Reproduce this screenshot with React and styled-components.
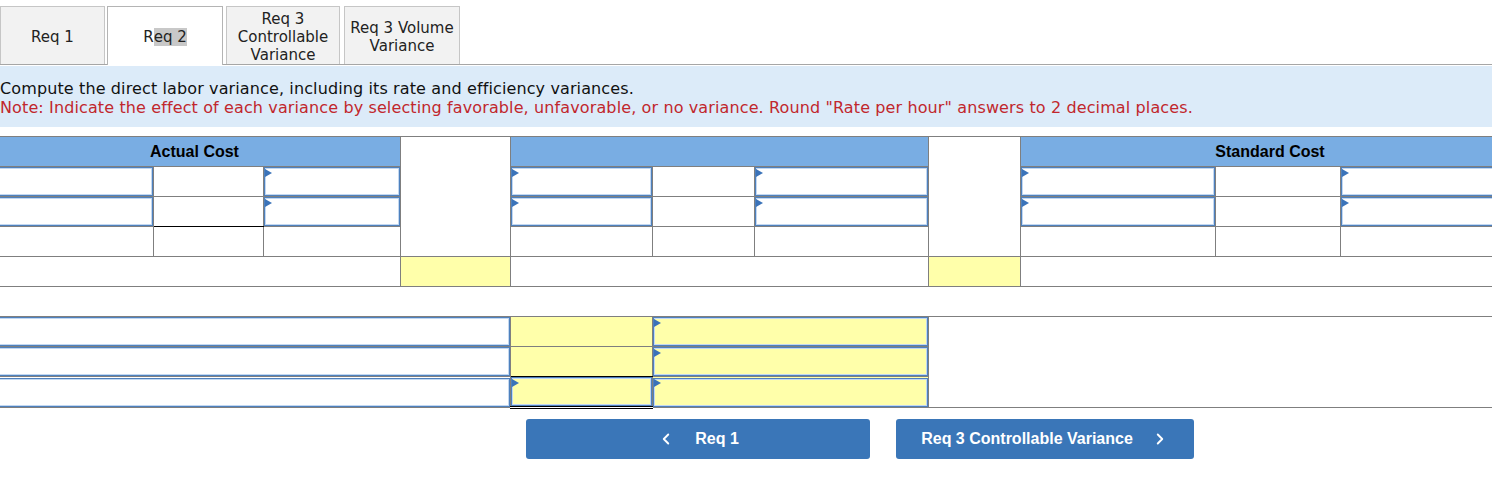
import styled, { createGlobalStyle, css } from "styled-components";
import { ChevronLeft, ChevronRight } from "lucide-react";

const GlobalStyle = createGlobalStyle`
  body {
    margin: 0;
    background: #fff;
    font-family: "DejaVu Sans", Verdana, sans-serif;
  }
`;

const Page = styled.div`
  width: 1492px;
  overflow: hidden;
`;

const TabBar = styled.div`
  display: flex;
  align-items: flex-end;
  height: 64px;
  border-bottom: 1px solid #a6a6a6;
`;

const Tab = styled.div`
  display: flex;
  align-items: center;
  justify-content: center;
  box-sizing: border-box;
  width: ${(p) => p.$w}px;
  height: 58px;
  padding-top: 2px;
  margin-right: ${(p) => p.$gap || 3}px;
  border: 1px solid #c6c6c6;
  border-bottom: none;
  background: #f2f2f2;
  font-size: 15px;
  line-height: 18px;
  color: #222;
  text-align: center;

  ${(p) =>
    p.$active &&
    css`
      background: #fff;
      border-color: #b4b4b4;
      height: 59px;
      padding-top: 1px;
      margin-bottom: -1px;
    `}
`;

const Selected = styled.span`
  background: #c8c8c8;
`;

const Instructions = styled.div`
  margin-top: 1px;
  height: 61px;
  box-sizing: border-box;
  padding: 13px 0 0 0;
  background: #dcebf9;
  font-size: 16px;
  letter-spacing: 0.12px;
  line-height: 19px;
  color: #111;
`;

const Line = styled.div`
  white-space: nowrap;
`;

const Note = styled(Line)`
  color: #c1272d;
`;

const TableWrap = styled.div`
  margin-top: 9px;
  overflow: hidden;
`;

const Grid = styled.table`
  margin-left: -12px;
  width: 1531px;
  table-layout: fixed;
  border-collapse: collapse;
  font-family: "Liberation Sans", Arial, sans-serif;
`;

const Row = styled.tr`
  height: 30px;
`;

const Head = styled.th`
  padding: 0;
  border: 1px solid #7f7f7f;
  background: #79ade3;
  font-size: 16px;
  font-weight: bold;
  color: #000;
  text-align: center;
`;

const Cell = styled.td`
  position: relative;
  padding: 0;
  border: 1px solid #7f7f7f;
  background: ${(p) => (p.$yellow ? "#ffffaa" : "#fff")};
  ${(p) => p.$bottom && `border-bottom: ${p.$bottom};`}
  ${(p) =>
    p.$open &&
    css`
      border-left: none;
      border-right: none;
    `}
`;

const Blank = styled.td`
  padding: 0;
  border: none;
`;

const Input = styled.input`
  display: block;
  box-sizing: border-box;
  width: 100%;
  height: 29px;
  margin: 0;
  border: 1px solid #4f81bd;
  box-shadow: inset 0 0 0 1px #c3d8f1;
  background: ${(p) => (p.$yellow ? "#ffffaa" : "#fff")};
  outline: none;
`;

const Arrow = styled.span`
  position: absolute;
  top: 2px;
  left: 1px;
  width: 0;
  height: 0;
  border-top: 4px solid transparent;
  border-bottom: 4px solid transparent;
  border-left: 7px solid #3b73b9;
`;

const ButtonRow = styled.div`
  display: flex;
  gap: 26px;
  margin-top: 10px;
  padding-left: 526px;
`;

const NavButton = styled.button`
  display: flex;
  align-items: center;
  justify-content: center;
  gap: ${(p) => p.$gap}px;
  width: ${(p) => p.$w}px;
  height: 40px;
  border: none;
  border-radius: 3px;
  background: #3a76b8;
  color: #fff;
  font-family: "Liberation Sans", Arial, sans-serif;
  font-size: 16px;
  font-weight: bold;
  cursor: pointer;
`;

function InputCell({ arrow, yellow, bottom, colSpan }) {
  return (
    <Cell $yellow={yellow} $bottom={bottom} colSpan={colSpan}>
      {arrow && <Arrow />}
      <Input $yellow={yellow} />
    </Cell>
  );
}

const widths = [165, 110, 137, 110, 142, 102, 174, 92, 195, 125, 179];

function EntryRow({ blackUnderB }) {
  return (
    <Row>
      <InputCell />
      <Cell $bottom={blackUnderB ? "1px solid #000" : undefined} />
      <InputCell arrow />
      <InputCell arrow />
      <Cell />
      <InputCell arrow />
      <InputCell arrow />
      <Cell />
      <InputCell arrow />
    </Row>
  );
}

function App() {
  return (
    <Page>
      <GlobalStyle />
      <TabBar>
        <Tab $w={105} $gap={2}>Req 1</Tab>
        <Tab $w={116} $gap={3} $active>
          R<Selected>eq 2</Selected>
        </Tab>
        <Tab $w={114} $gap={4}>
          Req 3
          <br />
          Controllable
          <br />
          Variance
        </Tab>
        <Tab $w={116}>
          Req 3 Volume
          <br />
          Variance
        </Tab>
      </TabBar>

      <Instructions>
        <Line>
          Compute the direct labor variance, including its rate and efficiency
          variances.
        </Line>
        <Note>
          Note: Indicate the effect of each variance by selecting favorable,
          unfavorable, or no variance. Round "Rate per hour" answers to 2
          decimal places.
        </Note>
      </Instructions>

      <TableWrap>
        <Grid>
          <colgroup>
            {widths.map((w, i) => (
              <col key={i} style={{ width: w }} />
            ))}
          </colgroup>
          <tbody>
            <Row>
              <Head colSpan={3}>Actual Cost</Head>
              <Cell rowSpan={4} />
              <Head colSpan={3} />
              <Cell rowSpan={4} />
              <Head colSpan={3}>Standard Cost</Head>
            </Row>
            <EntryRow />
            <EntryRow blackUnderB />
            <Row>
              <Cell />
              <Cell />
              <Cell />
              <Cell />
              <Cell />
              <Cell />
              <Cell />
              <Cell />
              <Cell />
            </Row>
            <Row>
              <Cell colSpan={3} />
              <Cell $yellow />
              <Cell colSpan={3} />
              <Cell $yellow />
              <Cell colSpan={3} />
            </Row>
            <Row>
              <Blank colSpan={11} />
            </Row>
            <Row>
              <InputCell colSpan={4} />
              <Cell $yellow />
              <InputCell colSpan={2} arrow yellow />
              <Cell colSpan={4} rowSpan={3} $open />
            </Row>
            <Row>
              <InputCell colSpan={4} />
              <Cell $yellow $bottom="1px solid #000" />
              <InputCell colSpan={2} arrow yellow />
            </Row>
            <Row>
              <InputCell colSpan={4} />
              <InputCell arrow yellow bottom="3px double #000" />
              <InputCell colSpan={2} arrow yellow />
            </Row>
          </tbody>
        </Grid>
      </TableWrap>

      <ButtonRow>
        <NavButton $w={344} $gap={20}>
          <ChevronLeft size={18} strokeWidth={2.5} />
          Req 1
        </NavButton>
        <NavButton $w={298} $gap={18}>
          Req 3 Controllable Variance
          <ChevronRight size={18} strokeWidth={2.5} />
        </NavButton>
      </ButtonRow>
    </Page>
  );
}

export default App;
